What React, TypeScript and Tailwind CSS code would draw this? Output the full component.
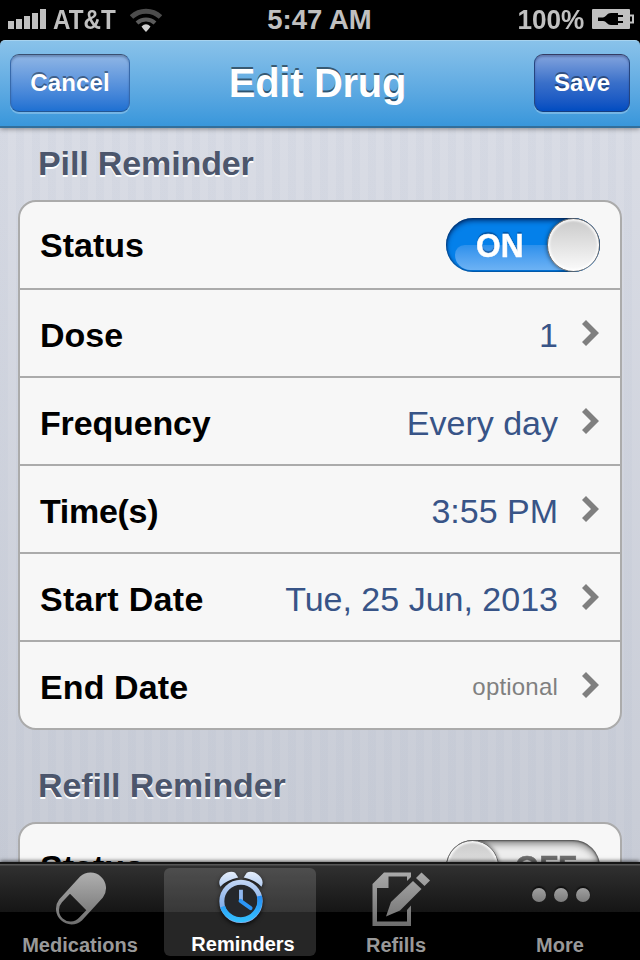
import React from "react";

function Chevron() {
  return (
    <svg className="ml-6 h-[26px] w-[17px] shrink-0" viewBox="0 0 17 26">
      <path d="M4 0 L17 13 L4 26 L0 22 L9 13 L0 4 Z" fill="#7f7f7f" />
    </svg>
  );
}

function Switch({ on }: { on: boolean }) {
  return (
    <div
      className={
        "relative h-[54px] w-[154px] shrink-0 overflow-hidden rounded-full " +
        (on
          ? "bg-[#0480ea] shadow-[inset_0_3px_5px_rgba(0,20,70,0.65),inset_0_0_2px_1px_rgba(0,40,90,0.55)]"
          : "bg-[#ededed] shadow-[inset_0_4px_7px_rgba(0,0,0,0.45),inset_0_0_2px_1px_rgba(0,0,0,0.5)]")
      }
    >
      <div
        className={
          "absolute top-[27px] left-[9px] h-[25px] w-[140px] rounded-tl-[14px] rounded-bl-[22px] bg-linear-to-b " +
          (on ? "from-[#2b90ec] to-[#6cb2f4]" : "from-[#f5f5f5] to-white")
        }
      />
      {on ? (
        <span className="absolute top-[10px] left-[29.5px] origin-left scale-x-[0.96] text-[33px] leading-[36px] font-bold text-white [-webkit-text-stroke:0.5px_white] [text-shadow:0_-2px_1px_rgba(0,50,110,0.55)]">
          ON
        </span>
      ) : (
        <span className="absolute top-[10px] left-[69px] origin-left scale-x-[0.94] text-[33px] leading-[36px] font-bold text-[#6f6f6f] [-webkit-text-stroke:0.5px_#6f6f6f]">
          OFF
        </span>
      )}
      <div
        className={
          "absolute top-0 h-[54px] w-[53px] rounded-full border-[1.5px] border-[#666] bg-linear-to-b from-[#cacaca] to-[#fbfbfb] shadow-[0_0_4px_rgba(0,0,0,0.55),inset_0_0_2px_2px_rgba(255,255,255,0.8)] " +
          (on ? "right-0" : "left-0")
        }
      />
    </div>
  );
}

function StatusRow({ on }: { on: boolean }) {
  return (
    <div className="flex h-[86px] items-center justify-between pr-5 pl-5">
      <span className="text-[34px] leading-[40px] font-bold text-black">Status</span>
      <Switch on={on} />
    </div>
  );
}

type RowProps = { label: string; value: string; small?: boolean; tracking?: string };

function Row({ label, value, small, tracking = "" }: RowProps) {
  return (
    <div className="flex h-[88px] items-center border-t-2 border-[#ababab] pr-[21px] pl-5">
      <span className={"flex-1 pt-1 text-[34px] leading-[40px] font-bold text-black " + tracking}>{label}</span>
      <span
        className={
          small
            ? "pt-[3px] text-[24px] leading-[40px] tracking-[0.2px] text-[#808080]"
            : "pt-1 text-[34px] leading-[40px] text-[#385487]"
        }
      >
        {value}
      </span>
      <Chevron />
    </div>
  );
}

function Heading({ children }: { children: React.ReactNode }) {
  return (
    <h2 className="pl-[38px] text-[34px] leading-[40px] font-bold tracking-[-0.12px] text-[#4c566c] [text-shadow:0_2px_0_white]">
      {children}
    </h2>
  );
}

function PillIcon() {
  return (
    <svg className="h-[60px] w-[60px]" viewBox="50 868 60 60">
      <defs>
        <linearGradient id="pill" x1="0" y1="872" x2="0" y2="926" gradientUnits="userSpaceOnUse">
          <stop offset="0" stopColor="#b0b0b0" />
          <stop offset="1" stopColor="#6c6c6c" />
        </linearGradient>
      </defs>
      <path
        d="M80.1 876.6 A15.5 15.5 0 0 1 102.9 897.4 L81.9 920.4 A15.5 15.5 0 0 1 59.1 899.6 Z M70 893.7 L62 902.2 A11.5 11.5 0 0 0 79 917.8 L86.3 910.3 Z"
        fill="url(#pill)"
        fillRule="evenodd"
      />
    </svg>
  );
}

function AlarmIcon() {
  return (
    <svg className="h-[60px] w-[60px] drop-shadow-[0_2px_2px_rgba(0,0,0,0.7)]" viewBox="209.5 868 60 60">
      <defs>
        <linearGradient id="bells" x1="0" y1="871" x2="0" y2="888" gradientUnits="userSpaceOnUse">
          <stop offset="0" stopColor="#e8f0fc" />
          <stop offset="1" stopColor="#b2ccf2" />
        </linearGradient>
        <linearGradient id="upper" x1="0" y1="880" x2="0" y2="908" gradientUnits="userSpaceOnUse">
          <stop offset="0" stopColor="#c4d8f6" />
          <stop offset="1" stopColor="#83ade8" />
        </linearGradient>
        <linearGradient id="lower" x1="0" y1="895" x2="0" y2="925" gradientUnits="userSpaceOnUse">
          <stop offset="0" stopColor="#2388f4" />
          <stop offset="1" stopColor="#36c5ff" />
        </linearGradient>
      </defs>
      <path d="M219.3 887.3 C216.500 882.500 219 878.500 222 875.500 C226 871.500 231.500 871 234.500 872.800 L237.700 877.700 C230 879.500 223.500 882.500 219.300 887.300 Z" fill="url(#bells)" />
      <path d="M261.700 887.300 C264.500 882.500 262 878.500 259 875.500 C255 871.500 249.500 871 246.500 872.800 L243.300 877.700 C251 879.500 257.500 882.500 261.700 887.300 Z" fill="url(#bells)" />
      <circle cx="240.500" cy="902.500" r="19.800" fill="#25282c" stroke="url(#upper)" strokeWidth="5.200" />
      <path d="M259.500 897 A19.800 19.800 0 0 1 221.500 908" fill="none" stroke="url(#lower)" strokeWidth="5.200" />
      <path d="M240.500 890.500 V903" stroke="#91b8ef" strokeWidth="4" />
      <path d="M240 902 L250.500 909.500" stroke="#2c96f6" strokeWidth="4" strokeLinecap="round" />
    </svg>
  );
}

function RefillIcon() {
  return (
    <svg className="h-[60px] w-[62px]" viewBox="370 868 62 60">
      <defs>
        <linearGradient id="note" x1="0" y1="872" x2="0" y2="926" gradientUnits="userSpaceOnUse">
          <stop offset="0" stopColor="#aaaaaa" />
          <stop offset="1" stopColor="#6e6e6e" />
        </linearGradient>
      </defs>
      <g fill="url(#note)">
        <path d="M384 872.500 H411 V877 L407 881 V876.500 H388.500 V888 H377 V921.500 H407 V910 L411 905.500 V926 H372.500 V884 Z" />
        <path d="M413 881 L421.500 889 L400 910.500 L386 916.500 L391 902 Z" />
        <path d="M416 878 L421.500 872.500 L430 880.500 L424.500 886 Z" />
      </g>
    </svg>
  );
}

function MoreIcon() {
  const dot = "h-[14px] w-[14px] rounded-full bg-linear-to-b from-[#a0a0a0] to-[#7c7c7c] shadow-[0_-2px_1px_#111]";
  return (
    <div className="flex h-[60px] items-center gap-2 pb-[7px] pl-[2px]">
      <i className={dot} />
      <i className={dot} />
      <i className={dot} />
    </div>
  );
}

function Battery() {
  return (
    <svg className="mt-[-2px] h-5 w-[42px]" viewBox="0 0 42 20">
      <rect width="38" height="20" rx="1" fill="#c0c0c0" />
      <path d="M38 6.500 H41 V13.500 H38" fill="none" stroke="#c0c0c0" strokeWidth="2" />
      <path d="M6 8.500 H11 C15 7 15 4 19 4 H26 V6 H31 V8 H26 V12 H31 V14 H26 V16 H19 C15 16 15 12.500 11 12 H6 Z" fill="#000" />
    </svg>
  );
}

const label = "text-[20px] leading-[24px] font-bold whitespace-nowrap";

export default function App() {
  return (
    <div className="flex h-[960px] w-[640px] flex-col overflow-hidden bg-black font-['Liberation_Sans',Arial,sans-serif]">
      <header className="grid h-10 shrink-0 grid-cols-[1fr_auto_1fr] items-center pr-[6px] pl-2 text-[27.5px] leading-[38px] font-bold text-[#c0c0c0]">
        <div className="flex items-center">
          <svg className="mt-[-2px] h-5 w-[38px]" viewBox="0 0 38 20" fill="#c0c0c0">
            <path d="M0 12h6v8H0z M8 10h6v10H8z M16 7h6v13h-6z M24 4h6v16h-6z M32 0h6v20h-6z" />
          </svg>
          <span className="ml-[7px] w-[64px] origin-left scale-x-[0.88]">AT&amp;T</span>
          <svg className="mt-[-1px] ml-[13px] h-6 w-8" viewBox="0 0 32 24">
            <path d="M1.500 9 A21 21 0 0 1 30.500 9" fill="none" stroke="#4c4c4c" strokeWidth="5" />
            <path d="M7 15 A13 13 0 0 1 25 15" fill="none" stroke="#5c5c5c" strokeWidth="4" />
            <path d="M11.500 18.500 Q16 14 20.500 18.500 Q19 21 16 24 Q13 21 11.500 18.500 Z" fill="#d0d0d0" />
          </svg>
        </div>
        <span className="pr-[3px] whitespace-nowrap">5:47 AM</span>
        <div className="flex items-center justify-end gap-2">
          <span className="origin-right scale-x-[0.95]">100%</span>
          <Battery />
        </div>
      </header>

      <nav className="relative z-10 grid h-[88px] shrink-0 grid-cols-[120px_1fr_96px] items-center rounded-t-[5px] border-t border-b-2 border-t-[#a7d3ef] border-b-[#326f9b] bg-linear-to-b from-[#89c2ea] to-[#3897db] px-[10px] pb-[2px] shadow-[0_1px_5px_rgba(0,0,0,0.4)]">
        <button className="h-[58px] w-[120px] rounded-[9px] border-[1.5px] border-x-[#3769ab] border-t-[#394f70] border-b-[#235693] bg-linear-to-b from-[#90b6e5] to-[#1d70d2] text-[24px] leading-[54px] font-bold tracking-[0.1px] text-white shadow-[0_2px_0_rgba(255,255,255,0.25),inset_0_2px_2px_rgba(20,40,80,0.3)] [text-shadow:0_-2px_0_rgba(0,0,0,0.4)]">
          Cancel
        </button>
        <h1 className="pr-[29px] text-center text-[40px] leading-[44px] font-bold tracking-[-0.3px] text-white [text-shadow:0_-2px_0_rgba(0,0,0,0.5)]">
          Edit Drug
        </h1>
        <button className="h-[58px] w-[96px] rounded-[9px] border-[1.5px] border-x-[#26457f] border-t-[#343c63] border-b-[#163d80] bg-linear-to-b from-[#83a4dd] via-[#396fc9] to-[#004cc1] text-[24px] leading-[54px] font-bold text-white shadow-[0_2px_0_rgba(255,255,255,0.25),inset_0_2px_2px_rgba(20,30,80,0.3)] [text-shadow:0_-2px_0_rgba(0,0,0,0.4)]">
          Save
        </button>
      </nav>

      <main className="h-[734px] shrink-0 overflow-hidden bg-[repeating-linear-gradient(90deg,rgba(120,140,175,0.045)_0px,rgba(120,140,175,0.045)_8px,transparent_8px,transparent_16px),linear-gradient(#d9dce5,#c8ccd6)]">
        <div className="pt-[15px]">
          <Heading>Pill Reminder</Heading>
        </div>
        <section className="mx-[18px] mt-[17px] overflow-hidden rounded-[18px] border-2 border-[#ababab] bg-[#f7f7f7]">
          <StatusRow on />
          <Row label="Dose" value="1" />
          <Row label="Frequency" value="Every day" tracking="tracking-[-0.15px]" />
          <Row label="Time(s)" value="3:55 PM" tracking="tracking-[-0.3px]" />
          <Row label="Start Date" value="Tue, 25 Jun, 2013" tracking="tracking-[0.3px]" />
          <Row label="End Date" value="optional" tracking="tracking-[0.1px]" small />
        </section>
        <div className="pt-[35px]">
          <Heading>Refill Reminder</Heading>
        </div>
        <section className="mx-[18px] mt-[17px] rounded-[18px] border-2 border-[#ababab] bg-[#f7f7f7]">
          <StatusRow on={false} />
        </section>
      </main>

      <footer className="relative grid h-[98px] shrink-0 grid-cols-4 border-t-2 border-[#161616] bg-[linear-gradient(#565656_0px,#565656_1px,#303030_2px,#151515_48px,#000_48px)] text-[#999] shadow-[0_-1px_4px_rgba(0,0,0,0.65)]">
        <div className="flex flex-col items-center pt-1">
          <PillIcon />
          <span className={label + " mt-[5px]"}>Medications</span>
        </div>
        <div className="mx-1 mt-1 flex h-[88px] flex-col items-center rounded-[6px] bg-white/15 text-white">
          <AlarmIcon />
          <span className={label + " mt-[6px] pl-[6px]"}>Reminders</span>
        </div>
        <div className="flex flex-col items-center pt-1 pl-[2px]">
          <RefillIcon />
          <span className={label + " mt-[5px] pr-[10px]"}>Refills</span>
        </div>
        <div className="flex flex-col items-center pt-1">
          <MoreIcon />
          <span className={label + " mt-[5px]"}>More</span>
        </div>
      </footer>
    </div>
  );
}
